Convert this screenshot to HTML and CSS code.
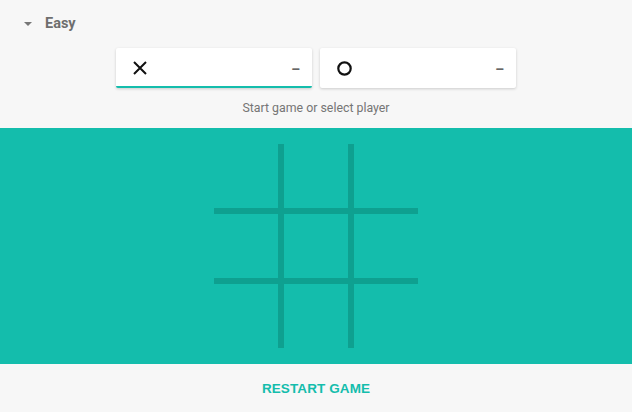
FILE: index.html
```html
<!DOCTYPE html>
<html>
<head>
<meta charset="utf-8">
<link rel="stylesheet" href="styles.css">
</head>
<body>
<div class="header">
  <span class="caret"></span>
  <span class="level">Easy</span>
</div>
<div class="players">
  <div class="player active">
    <svg class="mark" width="14" height="14" viewBox="0 0 14 14"><path d="M1 1L13 13M13 1L1 13" stroke="#111" stroke-width="2" fill="none"/></svg>
    <span class="score">–</span>
  </div>
  <div class="player">
    <svg class="mark" width="15" height="15" viewBox="0 0 15 15"><circle cx="7.5" cy="7.5" r="6.2" stroke="#111" stroke-width="2.2" fill="none"/></svg>
    <span class="score">–</span>
  </div>
</div>
<div class="status">Start game or select player</div>
<div class="field">
  <div class="board">
    <div class="cell"></div><div class="cell"></div><div class="cell"></div>
    <div class="cell"></div><div class="cell"></div><div class="cell"></div>
    <div class="cell"></div><div class="cell"></div><div class="cell"></div>
  </div>
</div>
<div class="footer">
  <span class="restart">RESTART GAME</span>
</div>
</body>
</html>
```
FILE: styles.css
```css
html, body {
  margin: 0;
  padding: 0;
  background: #f7f7f7;
  font-family: Roboto, "Liberation Sans", Arial, sans-serif;
}
.header {
  height: 47px;
  display: flex;
  align-items: center;
  padding-left: 24px;
  box-sizing: border-box;
}
.caret {
  width: 0;
  height: 0;
  border-left: 4px solid transparent;
  border-right: 4px solid transparent;
  border-top: 4px solid #777;
  margin-right: 13px;
  margin-top: 1px;
}
.level {
  font-family: Roboto, "Liberation Sans", Arial, sans-serif;
  font-weight: bold;
  font-size: 14.5px;
  color: #6e6e6e;
}
.players {
  display: flex;
  justify-content: center;
  gap: 8px;
  margin-top: 1px;
}
.player {
  width: 196px;
  height: 40px;
  box-sizing: border-box;
  background: #fff;
  border-radius: 2px;
  box-shadow: 0 1px 3px rgba(0,0,0,0.18);
  display: flex;
  align-items: center;
  justify-content: space-between;
  padding: 0 12px 0 17px;
}
.player.active {
  border-bottom: 2px solid #14bdac;
  padding-top: 2px;
}
.score {
  font-size: 14px;
  font-weight: bold;
  color: #666;
  margin-top: 2px;
}
.mark {
  display: block;
}
.status {
  height: 40px;
  line-height: 40px;
  text-align: center;
  font-size: 12.35px;
  color: #757575;
}
.field {
  background: #14bdac;
  height: 236px;
  display: flex;
  justify-content: center;
  align-items: center;
}
.board {
  display: grid;
  grid-template-columns: repeat(3, 64px);
  grid-template-rows: repeat(3, 64px);
  gap: 6px;
  background: #0ea090;
}
.cell {
  background: #14bdac;
}
.footer {
  height: 48px;
  display: flex;
  align-items: center;
  justify-content: center;
}
.restart {
  font-family: "Liberation Sans", Arial, sans-serif;
  font-weight: bold;
  font-size: 13.5px;
  color: #14bdac;
  letter-spacing: 0.1px;
}
```
